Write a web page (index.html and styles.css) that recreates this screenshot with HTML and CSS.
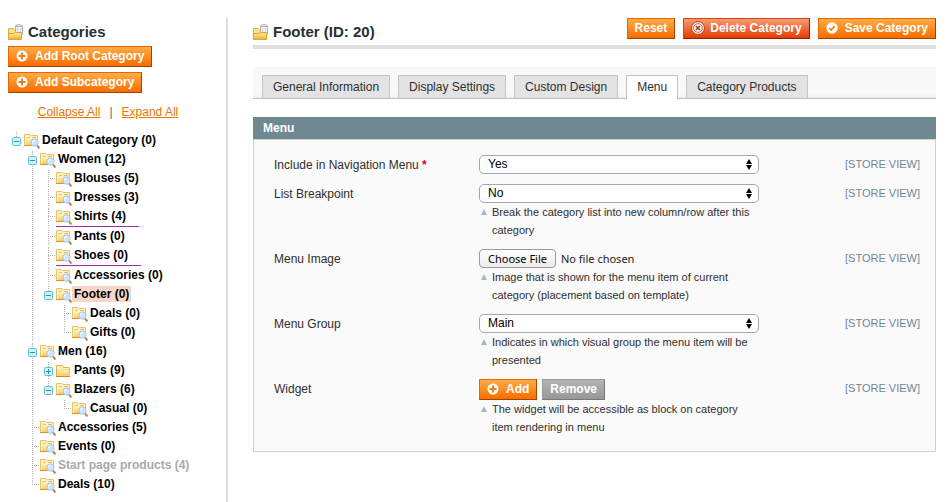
FILE: index.html
```html
<!DOCTYPE html>
<html lang="en">
<head>
<meta charset="utf-8">
<title>Manage Categories</title>
<link rel="stylesheet" href="styles.css">
</head>
<body>
<svg class="defs" aria-hidden="true">
  <defs>
    <linearGradient id="fold" x1="0" y1="0" x2="0" y2="1">
      <stop offset="0" stop-color="#fff3bd"/><stop offset="1" stop-color="#f6cb57"/>
    </linearGradient>
    <linearGradient id="gold" x1="0" y1="0" x2="0" y2="1">
      <stop offset="0" stop-color="#fff3b0"/><stop offset="1" stop-color="#f2ac2c"/>
    </linearGradient>
    <symbol id="folder" viewBox="0 0 16 16">
      <path d="M.5 13.500V2.500H6.500L7.500 4.500H13.500V13.500Z" fill="#fdeeb5" stroke="#dfb252"/>
      <path d="M1.500 13V7.500H5.500L6.500 6.500H13V13Z" fill="url(#fold)" stroke="#f7dc82"/>
      <path d="M0 13.500H14" stroke="#d3882c"/>
    </symbol>
    <symbol id="folder-find" viewBox="0 0 16 16">
      <path d="M.5 12.500V1.500H6L7 2.500H13.500V12.500Z" fill="#fdf0c0" stroke="#e8c26c"/>
      <path d="M3 4.500H6M8 4.500H12" stroke="#e8c26c"/>
      <path d="M2 12.500V6.500H6L7 5.500H13V12.500Z" fill="url(#fold)"/>
      <path d="M0 12.500H8" stroke="#d8923a"/>
      <path d="M13 12.500L15.500 15.500" stroke="#c08350" stroke-width="2"/>
      <circle cx="10.500" cy="9.500" r="3.700" fill="#cfe4fb" stroke="#aac6e6"/>
      <path d="M8.500 9.500A2 2 0 0 1 10.500 7.500" fill="none" stroke="#fff"/>
    </symbol>
    <symbol id="category" viewBox="0 0 16 16">
      <path d="M.5 15.500V4.500H5.500L6.500 6.500H12.500V15.500Z" fill="#fbe389" stroke="#e0b048"/>
      <path d="M7.500 1.500Q11 -.5 14.500 1.500V10.500H7.500Z" fill="#f3f3f3" stroke="#b4b4b4"/>
      <path d="M7 2.500H15" stroke="#b4b4b4"/>
      <path d="M9.500 4V9M12.500 4V9" stroke="#cfcfcf"/>
      <path d="M.5 15.500V9.500H6L7.500 8.500H13.500V15.500Z" fill="url(#gold)" stroke="#e0a335"/>
    </symbol>
    <symbol id="add" viewBox="0 0 12 12">
      <circle cx="6" cy="6" r="5.500" fill="#fff"/>
      <path d="M6 2.500V9.500M2.500 6H9.500" stroke="#f08019" stroke-width="2"/>
    </symbol>
    <symbol id="check" viewBox="0 0 12 12">
      <circle cx="6" cy="6" r="5.700" fill="#fff"/>
      <path d="M3.300 6.200L5.200 8L8.700 4.200" fill="none" stroke="#f08019" stroke-width="1.700"/>
    </symbol>
    <symbol id="delete" viewBox="0 0 14 14">
      <circle cx="7" cy="7" r="6.400" fill="#fff" stroke="#b23a12"/>
      <circle cx="7" cy="7" r="4.300" fill="#fff" stroke="#c9603d"/>
      <path d="M5 5L9 9M9 5L5 9" stroke="#a03a1c" stroke-width="1.700"/>
    </symbol>
    <symbol id="minus" viewBox="0 0 9 9">
      <rect x=".5" y=".5" width="8" height="8" rx="1" fill="#d3f0f6" stroke="#5dbfd0"/>
      <path d="M2 4.500H7" stroke="#2f93aa"/>
    </symbol>
    <symbol id="plus" viewBox="0 0 9 9">
      <rect x=".5" y=".5" width="8" height="8" rx="1" fill="#d3f0f6" stroke="#5dbfd0"/>
      <path d="M2 4.500H7M4.500 2V7" stroke="#2f93aa"/>
    </symbol>
    <symbol id="updown" viewBox="0 0 6 11">
      <path d="M3 0L6 5H0ZM3 11L6 6H0Z" fill="#000"/>
    </symbol>
  </defs>
</svg>

<div class="page">
  <aside class="sidebar">
    <h3 class="title"><svg class="i16"><use href="#category"/></svg>Categories</h3>
    <div class="stack">
      <button type="button" class="btn"><svg class="i12"><use href="#add"/></svg>Add Root Category</button>
      <button type="button" class="btn"><svg class="i12"><use href="#add"/></svg>Add Subcategory</button>
    </div>
    <div class="tree-actions"><a href="#">Collapse All</a><span>|</span><a href="#">Expand All</a></div>

    <ul class="tree">
      <li><div class="node"><svg class="toggle"><use href="#minus"/></svg><svg class="i16"><use href="#folder-find"/></svg><a href="#">Default Category (0)</a></div>
        <ul>
          <li><div class="node"><svg class="toggle"><use href="#minus"/></svg><svg class="i16"><use href="#folder-find"/></svg><a href="#">Women (12)</a></div>
            <ul>
              <li><div class="node leaf"><svg class="i16"><use href="#folder-find"/></svg><a href="#">Blouses (5)</a></div></li>
              <li><div class="node leaf"><svg class="i16"><use href="#folder-find"/></svg><a href="#">Dresses (3)</a></div></li>
              <li><div class="node leaf marked"><svg class="i16"><use href="#folder-find"/></svg><a href="#">Shirts (4)</a></div></li>
              <li><div class="node leaf"><svg class="i16"><use href="#folder-find"/></svg><a href="#">Pants (0)</a></div></li>
              <li><div class="node leaf marked"><svg class="i16"><use href="#folder-find"/></svg><a href="#">Shoes (0)</a></div></li>
              <li><div class="node leaf"><svg class="i16"><use href="#folder-find"/></svg><a href="#">Accessories (0)</a></div></li>
              <li><div class="node selected"><svg class="toggle"><use href="#minus"/></svg><svg class="i16"><use href="#folder-find"/></svg><a href="#">Footer (0)</a></div>
                <ul>
                  <li><div class="node leaf"><svg class="i16"><use href="#folder-find"/></svg><a href="#">Deals (0)</a></div></li>
                  <li><div class="node leaf"><svg class="i16"><use href="#folder-find"/></svg><a href="#">Gifts (0)</a></div></li>
                </ul>
              </li>
            </ul>
          </li>
          <li><div class="node"><svg class="toggle"><use href="#minus"/></svg><svg class="i16"><use href="#folder-find"/></svg><a href="#">Men (16)</a></div>
            <ul>
              <li><div class="node"><svg class="toggle"><use href="#plus"/></svg><svg class="i16"><use href="#folder"/></svg><a href="#">Pants (9)</a></div></li>
              <li><div class="node"><svg class="toggle"><use href="#minus"/></svg><svg class="i16"><use href="#folder-find"/></svg><a href="#">Blazers (6)</a></div>
                <ul>
                  <li><div class="node leaf"><svg class="i16"><use href="#folder-find"/></svg><a href="#">Casual (0)</a></div></li>
                </ul>
              </li>
            </ul>
          </li>
          <li><div class="node leaf"><svg class="i16"><use href="#folder-find"/></svg><a href="#">Accessories (5)</a></div></li>
          <li><div class="node leaf"><svg class="i16"><use href="#folder-find"/></svg><a href="#">Events (0)</a></div></li>
          <li><div class="node leaf inactive"><svg class="i16"><use href="#folder-find"/></svg><a href="#">Start page products (4)</a></div></li>
          <li><div class="node leaf"><svg class="i16"><use href="#folder-find"/></svg><a href="#">Deals (10)</a></div></li>
        </ul>
      </li>
    </ul>
  </aside>

  <main class="main">
    <header class="header">
      <h3 class="title"><svg class="i16"><use href="#category"/></svg>Footer (ID: 20)</h3>
      <div class="actions">
        <button type="button" class="btn">Reset</button>
        <button type="button" class="btn danger"><svg class="i14"><use href="#delete"/></svg>Delete Category</button>
        <button type="button" class="btn"><svg class="i12"><use href="#check"/></svg>Save Category</button>
      </div>
    </header>

    <nav class="tabs">
      <a href="#">General Information</a>
      <a href="#">Display Settings</a>
      <a href="#">Custom Design</a>
      <a href="#" class="active" aria-current="page">Menu</a>
      <a href="#">Category Products</a>
    </nav>

    <section class="panel">
      <h4 class="panel-head">Menu</h4>
      <form class="fields">
        <div class="row">
          <label for="include">Include in Navigation Menu <span class="req">*</span></label>
          <div class="value">
            <div class="select"><select id="include"><option>Yes</option><option>No</option></select><svg><use href="#updown"/></svg></div>
          </div>
          <span class="scope">[STORE VIEW]</span>
        </div>
        <div class="row">
          <label for="break">List Breakpoint</label>
          <div class="value">
            <div class="select"><select id="break"><option>No</option><option>Yes</option></select><svg><use href="#updown"/></svg></div>
            <p class="note">Break the category list into new column/row after this category</p>
          </div>
          <span class="scope">[STORE VIEW]</span>
        </div>
        <div class="row">
          <label for="image">Menu Image</label>
          <div class="value">
            <input type="file" id="image" class="file">
            <p class="note">Image that is shown for the menu item of current category (placement based on template)</p>
          </div>
          <span class="scope">[STORE VIEW]</span>
        </div>
        <div class="row">
          <label for="group">Menu Group</label>
          <div class="value">
            <div class="select"><select id="group"><option>Main</option></select><svg><use href="#updown"/></svg></div>
            <p class="note">Indicates in which visual group the menu item will be presented</p>
          </div>
          <span class="scope">[STORE VIEW]</span>
        </div>
        <div class="row">
          <label for="widget">Widget</label>
          <div class="value">
            <div class="pair">
              <button type="button" id="widget" class="btn"><svg class="i12"><use href="#add"/></svg>Add</button>
              <button type="button" class="btn muted">Remove</button>
            </div>
            <p class="note">The widget will be accessible as block on category item rendering in menu</p>
          </div>
          <span class="scope">[STORE VIEW]</span>
        </div>
      </form>
    </section>
  </main>
</div>
</body>
</html>
```
FILE: styles.css
```css
* { box-sizing: border-box; }

body {
  margin: 0;
  background: #fff;
  color: #2f2f2f;
  font: 12px/18px "Liberation Sans", Arial, Helvetica, sans-serif;
}

.defs { position: absolute; width: 0; height: 0; }

svg { flex: none; display: block; }
.i12 { width: 12px; height: 12px; }
.i14 { width: 14px; height: 14px; }
.i16 { width: 16px; height: 16px; }

ul { list-style: none; margin: 0; padding: 0; }

.page {
  display: flex;
  min-height: 100vh;
  padding-top: 18px;
}

.sidebar {
  flex: none;
  width: 228px;
  padding: 5px 0 8px 8px;
  border-right: 2px solid #ddd;
}

.main {
  flex: 1;
  min-width: 0;
  padding: 0 11px 16px 25px;
}

.title {
  display: flex;
  align-items: center;
  gap: 4px;
  margin: 0;
  color: #253033;
  font-size: 15px;
  line-height: 18px;
}

/* Buttons */
.btn {
  display: flex;
  align-items: center;
  gap: 7px;
  height: 21px;
  margin: 0;
  padding: 0 7px 1px;
  border: 1px solid;
  border-color: #ed6502 #a04300 #a04300 #ed6502;
  background: linear-gradient(#ffac47, #f76d00);
  color: #fff;
  font: bold 12px/18px "Liberation Sans", Arial, Helvetica, sans-serif;
  white-space: nowrap;
}
.btn.danger {
  gap: 5px;
  border-color: #d8430f #981b00 #981b00 #d8430f;
  background: linear-gradient(#fb9a72, #e23c05);
}
.btn.muted {
  border-color: #999 #777 #777 #999;
  background: linear-gradient(#b4b4b4, #989898);
}

.stack {
  display: flex;
  flex-direction: column;
  align-items: flex-start;
  gap: 5px;
  margin-top: 5px;
}

.tree-actions {
  display: flex;
  justify-content: center;
  gap: 9px;
  margin: 10px 18px 9px 0;
  color: #666;
}
.tree-actions a { color: #ea7601; }

/* Category tree */
.tree ul { padding-left: 16px; }
.tree li { position: relative; }
.tree li::before {
  content: "";
  position: absolute;
  left: 8px;
  top: 2px;
  bottom: 0;
  border-left: 1px dotted #b4b4b4;
}
.tree li:last-child::before { bottom: auto; height: 9px; }

.node {
  position: relative;
  display: flex;
  align-items: center;
  width: fit-content;
  height: 19px;
  white-space: nowrap;
}
.node .toggle {
  width: 9px;
  height: 9px;
  margin: 3px 3px 0 4px;
}
.node.leaf { padding-left: 16px; }
.node.leaf::before {
  content: "";
  position: absolute;
  left: 8px;
  top: 10px;
  width: 7px;
  border-top: 1px dotted #b4b4b4;
}
.node .i16 { margin-top: 2px; }
.node a {
  padding: 0 2px;
  color: #000;
  font-weight: bold;
  line-height: 16px;
  text-decoration: none;
}
.node.selected a { background: #f5d6c7; }
.node.inactive a { color: #aaa; }
.node.marked { height: 20px; padding-right: 11px; }
.node.marked::after {
  content: "";
  position: absolute;
  left: 16px;
  right: 0;
  bottom: -1px;
  border-bottom: 1px solid #a02ba0;
}

/* Page header */
.header {
  display: flex;
  justify-content: space-between;
  padding-bottom: 4px;
  border-bottom: 4px solid #dfdfdf;
}
.header .title { padding-top: 5px; }
.actions { display: flex; gap: 8px; }

/* Tabs */
.tabs {
  display: flex;
  gap: 8px;
  margin-top: 18px;
  padding: 8px 9px 0;
  border-bottom: 1px solid #bebebe;
  background: linear-gradient(#f8f8f8 27px, #efefef);
}
.tabs a {
  height: 23px;
  padding: 2px 10px;
  border: 1px solid #c4c4c4;
  border-bottom: 0;
  background: #e3e3e3;
  color: #2f2f2f;
  text-decoration: none;
  white-space: nowrap;
}
.tabs .active {
  height: 24px;
  margin-bottom: -1px;
  background: #fff;
}

/* Form panel */
.panel { margin-top: 18px; }
.panel-head {
  margin: 0;
  padding: 2px 10px;
  background: #6f8992;
  color: #fff;
  font-size: 12px;
  line-height: 18px;
}
.fields {
  display: grid;
  gap: 10px;
  padding: 15px 15px 15px 20px;
  border: 1px solid #d0d0d0;
  background: #fafafa;
}
.row {
  display: grid;
  grid-template-columns: 205px minmax(280px, 1fr) 75px;
  align-items: start;
}
.row label { padding-top: 1px; }
.value { width: 280px; }
.req { color: #d40707; font-weight: bold; }
.scope {
  color: #6f8992;
  font-size: 11px;
  white-space: nowrap;
}

.select { position: relative; }
.select select {
  display: block;
  width: 100%;
  height: 19px;
  padding: 0 8px 1px;
  appearance: none;
  border: 1px solid #a6a6a6;
  border-radius: 5px;
  background: #fff;
  color: #000;
  font: 12px/16px "Liberation Sans", Arial, Helvetica, sans-serif;
}
.select svg {
  position: absolute;
  right: 7px;
  top: 4px;
  width: 6px;
  height: 11px;
  pointer-events: none;
}

.file {
  display: block;
  width: 100%;
  height: 19px;
  color: #222;
  font: 11px/17px "Noto Sans", sans-serif;
}
.file::file-selector-button {
  height: 19px;
  margin: 0 5px 0 0;
  padding: 0 8px;
  border: 1px solid #999;
  border-radius: 4px;
  background: linear-gradient(#fff, #ececec);
  color: #000;
  font: 11px/17px "Noto Sans", sans-serif;
}

.note {
  position: relative;
  margin: 0;
  padding-left: 13px;
  font-size: 11px;
  line-height: 18px;
}
.note::before {
  content: "";
  position: absolute;
  left: 2px;
  top: 6px;
  border: 3px solid transparent;
  border-top: 0;
  border-bottom: 6px solid #a9b9be;
}

.pair { display: flex; gap: 5px; }
```
